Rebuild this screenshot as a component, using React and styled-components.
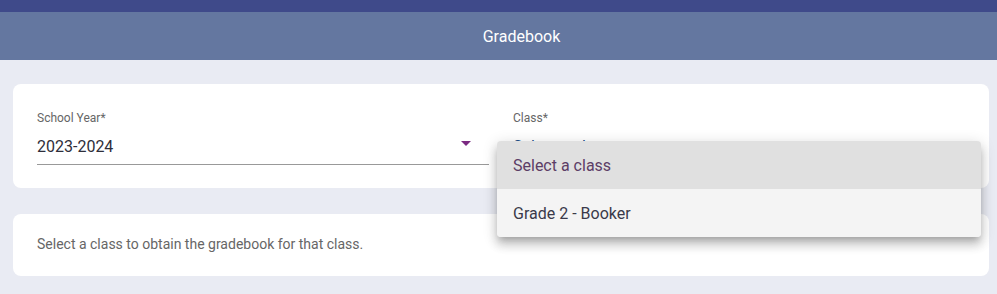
import React from "react";
import styled, { createGlobalStyle } from "styled-components";

const GlobalStyle = createGlobalStyle`
  body {
    margin: 0;
    background: #e9ebf3;
    font-family: Roboto, "Liberation Sans", sans-serif;
  }
`;

const TopBar = styled.div`
  height: 12px;
  background: #3f4a8a;
`;

const Header = styled.header`
  height: 48px;
  background: #6477a0;
  color: #ffffff;
  display: flex;
  align-items: center;
  justify-content: center;
  padding-left: 46px;
  font-size: 16px;
`;

const Content = styled.main`
  padding: 24px 8px 18px 13px;
  display: flex;
  flex-direction: column;
  gap: 26px;
`;

const Card = styled.section`
  background: #ffffff;
  border-radius: 8px;
  padding: ${(p) => p.$pad || "24px"};
  position: relative;
`;

const Fields = styled.div`
  display: grid;
  grid-template-columns: 1fr 1fr;
  gap: 24px;
`;

const Field = styled.div`
  display: flex;
  flex-direction: column;
  position: relative;
`;

const Label = styled.label`
  font-size: 12px;
  color: #666;
  height: 16px;
  line-height: 16px;
  margin-top: 2px;
`;

const SelectBox = styled.div`
  display: flex;
  align-items: center;
  justify-content: space-between;
  height: 36px;
  padding-top: 2px;
  border-bottom: 1px solid ${(p) => (p.$open ? "transparent" : "#999")};
  font-size: 16px;
  color: ${(p) => p.$color || "#2e2e3a"};
`;

const Arrow = styled.span`
  width: 0;
  height: 0;
  border-left: 5px solid transparent;
  border-right: 5px solid transparent;
  border-top: 5px solid #7b2a82;
  margin-right: 18px;
  margin-bottom: 6px;
`;

const Menu = styled.ul`
  position: absolute;
  top: 33px;
  left: -16px;
  right: -16px;
  margin: 0;
  padding: 0;
  list-style: none;
  background: #f4f4f4;
  border-radius: 4px;
  box-shadow: 0 5px 6px -3px rgba(0, 0, 0, 0.2), 0 8px 10px 1px rgba(0, 0, 0, 0.14),
    0 3px 14px 2px rgba(0, 0, 0, 0.12);
  overflow: hidden;
  z-index: 5;
`;

const MenuItem = styled.li`
  height: 48px;
  display: flex;
  align-items: center;
  padding: 0 16px;
  font-size: 16px;
  background: ${(p) => (p.$selected ? "#e0e0e0" : "#f4f4f4")};
  color: ${(p) => (p.$selected ? "#5c3d66" : "#3a3a4a")};
`;

const Hint = styled.p`
  margin: 0;
  font-size: 14px;
  line-height: 16px;
  color: #666;
`;

export default function App() {
  return (
    <>
      <GlobalStyle />
      <TopBar />
      <Header>Gradebook</Header>
      <Content>
        <Card $pad="24px 24px 23px">
          <Fields>
            <Field>
              <Label>School Year*</Label>
              <SelectBox>
                <span>2023-2024</span>
                <Arrow />
              </SelectBox>
            </Field>
            <Field>
              <Label>Class*</Label>
              <SelectBox $open $color="#1a4f8a">
                <span>Select a class</span>
              </SelectBox>
              <Menu>
                <MenuItem $selected>Select a class</MenuItem>
                <MenuItem>Grade 2 - Booker</MenuItem>
              </Menu>
            </Field>
          </Fields>
        </Card>
        <Card $pad="22px 24px 24px">
          <Hint>Select a class to obtain the gradebook for that class.</Hint>
        </Card>
      </Content>
    </>
  );
}
